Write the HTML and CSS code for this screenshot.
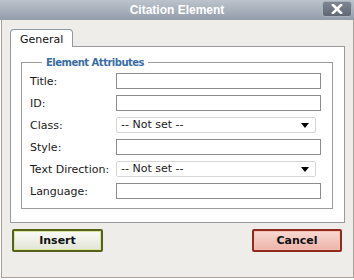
FILE: index.html
```html
<!DOCTYPE html>
<html lang="en">
<head>
  <meta charset="UTF-8" />
  <title>Citation Element</title>
  <link rel="stylesheet" href="styles.css">
</head>
<body>

  <div class="titlebar">
    <span class="title">Citation Element</span>
    <button class="close" title="Close">
      <svg width="12" height="10" viewBox="0 0 12 10">
        <path d="M2 1 L10 9 M10 1 L2 9" stroke="#fff" stroke-width="2.6" stroke-linecap="square" />
      </svg>
    </button>
  </div>

  <div class="window">

    <!-- Abas -->
    <div class="tabs">
      <div class="tab active">General</div>
    </div>

    <div class="panel">
      <fieldset class="attrs">
        <legend>Element Attributes</legend>

        <div class="row">
          <label for="title">Title:</label>
          <input type="text" id="title" />
        </div>
        <div class="row">
          <label for="id">ID:</label>
          <input type="text" id="id" />
        </div>
        <div class="row">
          <label for="class">Class:</label>
          <div class="select" id="class">-- Not set --<span class="arrow"></span></div>
        </div>
        <div class="row">
          <label for="style">Style:</label>
          <input type="text" id="style" />
        </div>
        <div class="row">
          <label for="dir">Text Direction:</label>
          <div class="select" id="dir">-- Not set --<span class="arrow"></span></div>
        </div>
        <div class="row">
          <label for="lang">Language:</label>
          <input type="text" id="lang" />
        </div>
      </fieldset>
    </div>

    <div class="actions">
      <button class="btn insert">Insert</button>
      <button class="btn cancel">Cancel</button>
    </div>

  </div>

</body>
</html>
```

FILE: styles.css
```css
/* Reset básico */
* {
  margin: 0;
  padding: 0;
  box-sizing: border-box;
}
body {
  font-family: 'DejaVu Sans', Verdana, sans-serif;
  font-size: 11px;
  color: #222;
  background: #fff;
  width: 354px;
  height: 280px;
  overflow: hidden;
}

/* Barra de título */
.titlebar {
  height: 20px;
  background: linear-gradient(#bcc3cc, #939daa);
  display: flex;
  align-items: center;
  justify-content: center;
  position: relative;
}
.title {
  font-family: 'Liberation Sans', Arial, sans-serif;
  font-weight: bold;
  font-size: 12px;
  color: #fff;
}
.close {
  position: absolute;
  top: 1px;
  right: 2px;
  width: 30px;
  height: 16px;
  border: 1px solid #a8b0ba;
  border-radius: 3px;
  background: linear-gradient(#7d8692, #5f6873);
  display: flex;
  align-items: center;
  justify-content: center;
}

/* Corpo da janela */
.window {
  margin-left: 1px;
  width: 353px;
  height: 258px;
  background: #efedea;
  border: 1px solid #a9a19a;
  border-top: none;
  padding: 9px 8px 0 8px;
}

.tabs {
  display: flex;
  height: 17px;
  position: relative;
  z-index: 1;
}
.tab {
  width: 63px;
  height: 18px;
  background: #fff;
  border: 1px solid #8e99a6;
  border-bottom: none;
  border-radius: 4px 4px 0 0;
  padding: 3px 0 0 9px;
  color: #111;
}

.panel {
  width: 335px;
  height: 177px;
  background: #fff;
  border: 1px solid #9a9a9a;
  padding: 10px 11px 0 10px;
}

/* Fieldset */
.attrs {
  border: 1px solid #9c9c9c;
  height: 152px;
  padding: 2px 11px 0 8px;
}
.attrs legend {
  font-size: 10px;
  font-weight: bold;
  letter-spacing: -0.5px;
  color: #3a6da6;
  padding: 0 4px;
  margin-left: 12px;
}

.row {
  display: flex;
  align-items: center;
  height: 22px;
}
.row label {
  width: 86px;
  color: #1a1a1a;
}
.row input {
  width: 205px;
  height: 16px;
  border: 1px solid #8c8c8c;
  background: #fff;
}
.select {
  width: 200px;
  height: 16px;
  border: 1px solid #d6d6d6;
  border-radius: 2px;
  background: #fff;
  padding-left: 4px;
  line-height: 14px;
  color: #1a1a1a;
  position: relative;
}
.arrow {
  position: absolute;
  right: 6px;
  top: 5px;
  border-left: 4px solid transparent;
  border-right: 4px solid transparent;
  border-top: 5px solid #000;
}

/* Botões */
.actions {
  display: flex;
  justify-content: space-between;
  padding: 6px 3px 0 2px;
}
.btn {
  font-family: 'DejaVu Sans', Verdana, sans-serif;
  font-size: 11px;
  font-weight: bold;
  color: #111;
  width: 90px;
  height: 23px;
  border-radius: 2px;
  cursor: pointer;
}
.insert {
  width: 91px;
  border: 2px solid #55621c;
  background: linear-gradient(#fbfbf7, #e2e4d6);
  box-shadow: inset 0 0 0 1px #d9e39a;
}
.cancel {
  border: 2px solid #8e2b1e;
  background: linear-gradient(#f8d9d2, #eeb3a8);
  box-shadow: inset 0 0 0 1px #f7c0b5;
}
```
